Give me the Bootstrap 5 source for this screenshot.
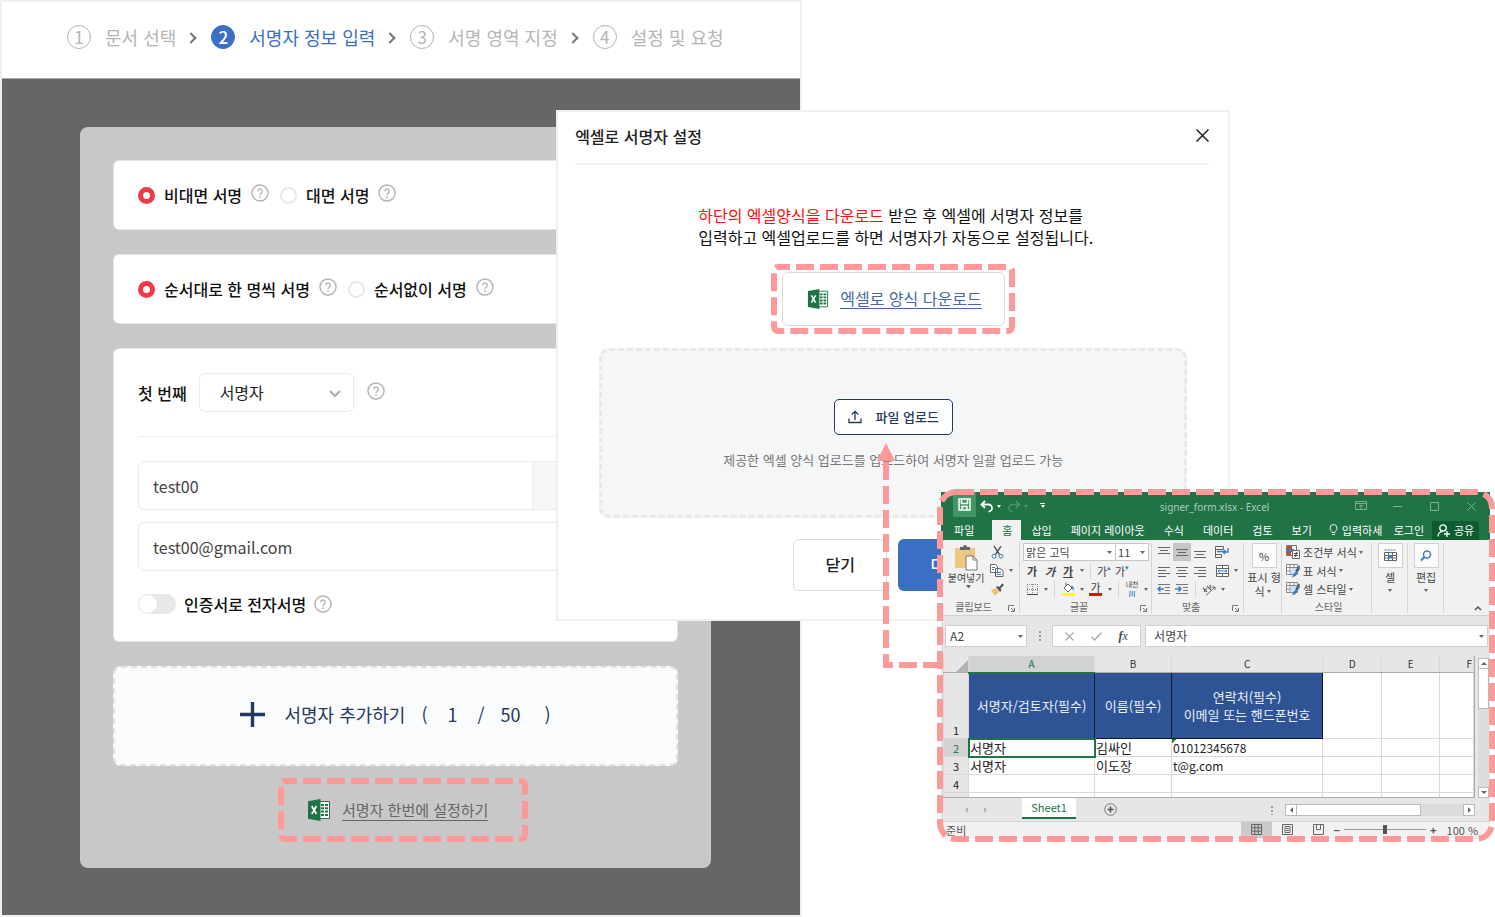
<!DOCTYPE html>
<html lang="ko">
<head>
<meta charset="utf-8">
<meta name="viewport" content="width=device-width, initial-scale=1">
<title>엑셀로 서명자 설정</title>
<link href="https://cdn.jsdelivr.net/npm/bootstrap@5.3.0/dist/css/bootstrap.min.css" rel="stylesheet">
<style>
:root{--pink:#ff9999;--navy:#24395e;--blue:#3a6fc4;--xl:#217346}
body{font-family:"Noto Sans CJK KR","Noto Sans",sans-serif;font-size:16px;line-height:24px;color:#111;background:#fff}
button{font-family:inherit}
.stage{min-height:100vh}
.wizard{width:53.65%;min-height:100vh;border:2px solid #f0f0f0}
.steps{height:77px;padding:0 0 7px 65px;border-bottom:1px solid #aaa;font-size:18px;color:#b5b5b5;white-space:nowrap}
.steps li{display:flex;align-items:center}
.steps li+li::before{content:"";width:8px;height:8px;border:solid #777;border-width:2px 2px 0 0;transform:rotate(45deg);margin:2px 16px 0 11px}
.num{width:24px;height:24px;border:1px solid #b5b5b5;border-radius:50%;font-size:17px;line-height:22px;text-align:center;margin-right:14px}
.now{color:var(--blue)}
.now .num{background:var(--blue);border-color:var(--blue);color:#fff;font-weight:500}
.dim{background:#666;padding:48px 89px 46px 78px}
.board{background:#c8c8c8;border-radius:8px;padding:33px 33px 26px}
.box{background:#fff;border-radius:6px;border:1px solid #e4e4e4;padding:0 24px;font-weight:500}
.choice{height:70px;margin-bottom:24px}
.choice .form-check-input,.setup .form-check-input{float:none;margin:0;box-shadow:none}
.choice .form-check-input{width:17px;height:17px;border:2px solid #e8e8e8;margin-right:9px}
.choice .form-check-input:checked{background:#fff;border:5px solid #ee3a49}
.help{width:18px;height:18px;margin:0 11px 4px 9px;flex:none}
.setup{padding-top:24px;padding-bottom:25px;margin-bottom:24px}
.first{margin-right:12px}
.role{width:155px;height:39px;font-size:16px;line-height:24px;padding:0 20px 2px;margin-right:4px;border-color:#ebebeb;border-radius:6px;color:#222;background-position:right 10px center;background-size:16px 16px;
--bs-form-select-bg-img:url("data:image/svg+xml,%3csvg xmlns='http://www.w3.org/2000/svg' viewBox='0 0 16 16'%3e%3cpath fill='none' stroke='%23aaa' stroke-width='2' d='m3 6 5 5 5-5'/%3e%3c/svg%3e")}
.setup hr{margin:24px 0;border-color:#bbb}
.field{height:49px;border-color:#ebebeb;border-radius:6px;padding:0 14px;font-size:16px;color:#444}
.addon{width:121px;background:#f7f7f7;border-color:#ebebeb}
.cert{margin-top:21px}
.setup .form-switch .form-check-input{width:38px;height:20px;border:0;background-color:#e8e8e8;background-size:20px 20px;
--bs-form-switch-bg:url("data:image/svg+xml,%3csvg xmlns='http://www.w3.org/2000/svg' viewBox='-4 -4 8 8'%3e%3ccircle r='3.8' fill='%23fff' stroke='%23e4e4e4' stroke-width='.4'/%3e%3c/svg%3e")}
.add{height:100px;background:#fafbfd;border:2px dashed #e2e2e2;border-radius:8px;color:var(--navy);font-size:18px;padding:0 0 4px;margin-bottom:12px}
.add svg{width:25px;height:25px;margin-right:19px}
.ring{position:relative}
.ring>.dash{position:absolute;inset:0;width:100%;height:100%;pointer-events:none}
.dash rect{x:3px;y:3px;width:calc(100% - 6px);height:calc(100% - 6px);fill:none;stroke:var(--pink);stroke-width:6;stroke-dasharray:18 6;stroke-dashoffset:6}
.batch{width:250px;height:64px;margin-left:165px;padding-left:29px;font-size:15px}
.batch a{color:#666}
.xicon{width:24px;height:24px;margin-right:11px;flex:none}
a.lined{text-decoration:none;border-bottom:1px solid currentColor;line-height:20px}

.sheet-dialog{position:absolute;left:37.2%;top:110px;width:45.1%;height:511px;background:#fff;border:2px solid #f0f0f0}
.sheet-dialog header{margin:0 19px 0 17px;height:53px;padding-bottom:4px;border-bottom:2px solid #f0f0f0;font-weight:500;color:#222}
.x{border:0;background:none;padding:0;width:13px;height:24px;display:flex;align-items:center}
.desc{margin:39px auto 16px;width:390px;line-height:22px;color:#111;white-space:nowrap}
.desc em{font-style:normal;color:#ff0d0d}
.down{width:244px;height:70px;margin:0 auto 14px;padding:8px 10px 8px 11px}
.down>a{display:flex;align-items:center;height:54px;width:100%;border:1px solid #dcdcdc;border-radius:6px;padding-left:24px;color:#4668a6;text-decoration:none}
.down .xicon{width:22px;height:22px}
.down u{text-decoration:none;border-bottom:1px solid;line-height:20px;margin-bottom:1px}
.drop{margin:0 41px;height:170px;background:#f5f6f8;border:3px dashed #e8e8e8;border-radius:10px;font-size:13px;line-height:20px;color:#777;padding-top:48px}
.upload{width:119px;height:36px;background:#fff;border:1px solid #24395e;border-radius:5px;color:#24395e;font-weight:500;font-size:13px;padding:0;margin-bottom:15px}
.upload svg{width:14px;height:14px;margin-right:14px}
.acts{gap:11px;margin-top:21px;padding-right:1px}
.acts button{width:94px;height:52px;border-radius:6px;padding:0 0 2px;font-size:16px;font-weight:500}
.acts .close-it{border:1px solid #dcdcdc;background:#fff;color:#222}
.acts .next{background:var(--blue);color:#fff;border:0}

.excel{position:absolute;left:62.95%;right:5px;min-width:549px;top:492px;background:#e6e6e6;font-size:11px;line-height:14px;color:#444}
.excel>.frame{position:absolute;left:-4px;top:-3px;width:calc(100% + 9px);height:calc(100% + 6px);pointer-events:none}
.frame rect{rx:16px;stroke-dashoffset:0}
.link-line{position:absolute;right:100%;top:-50px;width:67px;height:230px;pointer-events:none}
.excel button{border:0;background:none;padding:0;color:inherit;font-size:inherit;line-height:inherit;display:flex;align-items:center;justify-content:center}
.excel svg{flex:none}
.cap{height:28px;background:var(--xl);color:#fff}
.cap .save{width:23px;height:25px;background:#439467;margin-left:12px}
.cap .wbtn{width:37px;color:#7db094}
.cap .name{color:#a9cdb8;font-size:10px;font-family:"Noto Sans",sans-serif;padding-left:40px;padding-top:2px}
.tabs{height:20px;background:var(--xl);color:#fff;white-space:nowrap}
.tabs a{color:#fff;text-decoration:none;padding:0 9px 0 10px;line-height:20px}
.tabs a.file{padding:0 18px 0 13px}
.tabs a.on{background:#f1f1f1;color:var(--xl)}
.tabs .share{background:#0e5c2f;width:47px;height:19px;color:#fff;margin-right:11px}
.ribbon{height:76px;background:#f1f1f1;border-bottom:1px solid #d2d2d2;white-space:nowrap}
.grp{position:relative;border-right:1px solid #d5d5d5;margin:3px 0 5px;padding-left:3px;height:70px}
.grp>.lab{height:15px;font-size:10px;color:#666;text-align:center;line-height:18px}
.grp .launch{position:absolute;right:4px;bottom:1px;width:7px;height:7px}
.rows{display:grid;grid-template-rows:18px 19px 18px;height:55px}
.rows>div{display:flex;align-items:center}
.rows button{width:18px;height:18px}
.excel .rows .dd,.dd{width:9px;height:12px}
.dd::after{content:"";border:solid transparent;border-width:3px 2px 0;border-top-color:#666;display:block}
.cap .dd::after{border-top-color:#fff}
.vs{width:9px;height:16px;background:linear-gradient(#d5d5d5,#d5d5d5) center/1px 100% no-repeat}
.excel .pick{background-color:#fff;border:1px solid #c6c6c6;border-radius:0;height:18px;font-size:11px;line-height:14px;padding:0 0 0 2px;color:#444;min-height:0;background-position:right 3px center;background-size:5px 3px;
--bs-form-select-bg-img:url("data:image/svg+xml,%3csvg xmlns='http://www.w3.org/2000/svg' viewBox='0 0 5 3'%3e%3cpath fill='%23666' d='M0 0h5L2.500 3z'/%3e%3c/svg%3e")}
.ga{font-size:10px}
.big{display:flex;flex-direction:column;align-items:center;width:30px;height:55px;line-height:14px}
.excel .big .tile{width:25px;height:25px;border:1px solid #d0d0d0;background:#fbfbfb;margin-bottom:2px}
.sty button{width:auto;justify-content:flex-start}
.sty svg{margin-right:3px}
.fx{padding:9px 2px 9px 4px;height:40px}
.fx input,.fx .tools,.fx select.pick{height:22px;border:1px solid #cfcfcf;background-color:#fff;border-radius:0;font-size:12px;line-height:16px;color:#444}
.fx .cell{flex:1;min-width:0;padding:0 8px}
.grid-wrap{padding-left:2px;height:142px;overflow:hidden}
.cells{flex:1;min-width:0;height:142px;overflow:hidden;border-bottom:1px solid #aaa;border-right:1px solid #aaa}
.cells table{width:100%;table-layout:fixed;border-collapse:collapse;color:#222;font-size:13px;line-height:16px;background:#fff}
.cells td,.cells th{border:1px solid #d9d9d9;padding:0 1px;height:18px;overflow:hidden;white-space:nowrap;font-weight:400}
.cells thead th{background:#e6e6e6;border-top:0;border-bottom-color:#aaa;height:16px;font-size:10px;line-height:15px;vertical-align:top;overflow:visible;text-align:center;color:#333}
.cells tbody th{background:#e6e6e6;font-size:11px;text-align:center;vertical-align:bottom;line-height:15px}
.cells thead th.hot{background:#d2d2d2;color:var(--xl);border-bottom:2px solid var(--xl)}
.cells tbody th.hot{background:#d2d2d2;color:var(--xl)}
.cells .hd td.k{background:#2f5496;color:#e9eef7;text-align:center;line-height:18px;border-color:#10182b}
.cells .hd td,.cells .hd th{height:66px}
.cells td.sel{outline:2px solid var(--xl);outline-offset:-1px}
.cells td.flag{background:linear-gradient(135deg,#1a8a1a 3px,transparent 3px) no-repeat}
.cells td.lat{font-size:12px}
.vbar{width:15px;padding:2px 1px 0 3px}
.vbar button{width:11px;height:11px;background:#fff;border:1px solid #bbb}
.vbar .thumb{height:40px;width:11px;background:#fff;border:1px solid #bbb;border-top:0}
.vbar .rail{flex:1;width:11px;background:#dcdcdc}
.up::after{content:"";border:solid transparent;border-width:0 3px 3px;border-bottom-color:#666}
.dn::after{content:"";border:solid transparent;border-width:3px 3px 0;border-top-color:#666}
.lf::after{content:"";border:solid transparent;border-width:3px 3px 3px 0;border-right-color:#666}
.rt::after{content:"";border:solid transparent;border-width:3px 0 3px 3px;border-left-color:#666}
.faint::after{opacity:.4}
.books{height:23px;color:#444}
.books .tab1{width:54px;height:21px;background:#fff;border-bottom:2px solid var(--xl);color:var(--xl);text-align:center;line-height:19px;text-decoration:none;margin-left:27px}
.hbar{width:190px;margin-right:15px;height:12px}
.hbar button{width:12px;height:12px;background:#fff;border:1px solid #bbb}
.hbar .thumb{width:124px;height:12px;background:#fff;border:1px solid #bbb;border-left:0}
.hbar .rail{flex:1;height:12px;background:#dcdcdc}
.stat{height:18px;background:#f1f1f1;border-top:1px solid #d2d2d2;color:#555;line-height:12px;padding:0 12px 2px 5px}
.stat button{width:31px;height:16px}
.stat .on{background:#cacaca}
.zoomer{appearance:none;width:82px;height:12px;background:linear-gradient(#999,#999) center/100% 1px no-repeat;margin:0 4px}
.zoomer::-webkit-slider-thumb{appearance:none;width:4px;height:9px;background:#555}
.pct{margin-left:10px}
</style>
</head>
<body>
<svg width="0" height="0" class="position-absolute" aria-hidden="true">
<symbol id="q" viewBox="0 0 18 18"><circle cx="9" cy="9" r="8" fill="none" stroke="#b3b3b3" stroke-width="1.400"/><path d="M6.700 7.300a2.300 2.300 0 1 1 3.500 2c-.8.500-1.200.9-1.200 1.700v.3" fill="none" stroke="#b3b3b3" stroke-width="1.300"/><circle cx="9" cy="13.200" r=".9" fill="#b3b3b3"/></symbol>
<symbol id="xls" viewBox="0 0 24 24"><path d="M12 3.500h10.500v17H12z" fill="#fff" stroke="#207347"/><path d="M14 6h3v2h-3zm4 0h3v2h-3zm-4 3.300h3v2h-3zm4 0h3v2h-3zm-4 3.300h3v2h-3zm4 0h3v2h-3zm-4 3.300h3v2h-3zm4 0h3v2h-3z" fill="#207347"/><path d="M1 3.200 13.500 1v22L1 20.800z" fill="#207347"/><path d="m4.800 8 4.600 8M9.400 8l-4.600 8" stroke="#fff" stroke-width="1.700"/></symbol>
<symbol id="ln-t" viewBox="0 0 14 14"><path d="M1 2.500h12M3 5.500h8M1 8.500h12" stroke="#666"/></symbol>
<symbol id="ln-b" viewBox="0 0 14 14"><path d="M1 6.500h12M3 9.500h8M1 12.500h12" stroke="#666"/></symbol>
<symbol id="ln-m" viewBox="0 0 14 14"><path d="M1 4.500h12M3 7.500h8M1 10.500h12" stroke="#666"/></symbol>
<symbol id="ln-l" viewBox="0 0 14 14"><path d="M1 3.500h12M1 6.500h8M1 9.500h12M1 12.500h8" stroke="#666"/></symbol>
<symbol id="ln-c" viewBox="0 0 14 14"><path d="M1 3.500h12M3 6.500h8M1 9.500h12M3 12.500h8" stroke="#666"/></symbol>
<symbol id="ln-r" viewBox="0 0 14 14"><path d="M1 3.500h12M5 6.500h8M1 9.500h12M5 12.500h8" stroke="#666"/></symbol>
<symbol id="la" viewBox="0 0 7 7"><path d="M.5 6V.5H6M3 3l3 3M6.500 3v3.500H3" fill="none" stroke="#777"/></symbol>
<symbol id="tb" viewBox="0 0 14 14"><path d="M.5.5h11v10H.5zM.5 3.500h11M.5 7h11M4 .5v10M8 .5v10" fill="#fff" stroke="#888"/><path d="M4 4h7v6H5z" fill="#cfe0f2"/><path d="m13.500 3-6 7-1.500 3.500 3.500-1.500 4.500-7z" fill="#3d7cc0"/><path d="m13.500 2-3.500 5" stroke="#555" stroke-width="1.500"/></symbol>
</svg>

<main class="stage position-relative">
<section class="wizard d-flex flex-column">
  <ol class="steps list-unstyled d-flex align-items-center mb-0 flex-shrink-0">
    <li><span class="num">1</span>문서 선택</li>
    <li><span class="d-flex align-items-center now"><span class="num">2</span>서명자 정보 입력</span></li>
    <li><span class="num">3</span>서명 영역 지정</li>
    <li><span class="num">4</span>설정 및 요청</li>
  </ol>
  <div class="dim flex-grow-1">
    <form class="board">
      <div class="box choice d-flex align-items-center">
        <input class="form-check-input" type="radio" name="mode" id="m1" checked><label for="m1">비대면 서명</label><svg class="help"><use href="#q"/></svg>
        <input class="form-check-input" type="radio" name="mode" id="m2"><label for="m2">대면 서명</label><svg class="help"><use href="#q"/></svg>
      </div>
      <div class="box choice d-flex align-items-center">
        <input class="form-check-input" type="radio" name="order" id="o1" checked><label for="o1">순서대로 한 명씩 서명</label><svg class="help"><use href="#q"/></svg>
        <input class="form-check-input" type="radio" name="order" id="o2"><label for="o2">순서없이 서명</label><svg class="help"><use href="#q"/></svg>
      </div>
      <div class="box setup">
        <div class="d-flex align-items-center">
          <label for="role" class="first">첫 번째</label>
          <select class="form-select role" id="role"><option>서명자</option></select>
          <svg class="help"><use href="#q"/></svg>
        </div>
        <hr>
        <div class="input-group mb-2 pb-1">
          <input class="form-control field" type="text" value="test00" aria-label="이름">
          <span class="input-group-text addon"></span>
        </div>
        <input class="form-control field" type="email" value="test00@gmail.com" aria-label="이메일">
        <div class="form-switch cert d-flex align-items-center ps-0">
          <input class="form-check-input" type="checkbox" role="switch" id="cert">
          <label for="cert" class="ms-2">인증서로 전자서명</label><svg class="help mb-0 ms-2"><use href="#q"/></svg>
        </div>
      </div>
      <button type="button" class="add w-100 d-flex align-items-center justify-content-center">
        <svg viewBox="0 0 25 25"><path d="M12.500 0v25M0 12.500h25" stroke="#24395e" stroke-width="3.400"/></svg>
        <span class="me-3">서명자 추가하기</span><span class="me-3">(</span><span class="me-3 ms-1">1</span><span class="me-3 ms-1">/</span><span class="me-3">50</span><span class="ms-2">)</span>
      </button>
      <div class="ring batch d-flex align-items-center">
        <svg class="xicon"><use href="#xls"/></svg><a href="#" class="lined">서명자 한번에 설정하기</a>
        <svg class="dash"><rect rx="4"/></svg>
      </div>
    </form>
  </div>
</section>

<section class="sheet-dialog" role="dialog" aria-labelledby="dt">
  <header class="d-flex align-items-center justify-content-between"><span id="dt">엑셀로 서명자 설정</span>
    <button class="x" aria-label="닫기"><svg width="13" height="13" viewBox="0 0 13 13"><path d="m.5.5 12 12m0-12-12 12" stroke="#222" stroke-width="1.500"/></svg></button></header>
  <p class="desc"><em>하단의 엑셀양식을 다운로드</em> 받은 후 엑셀에 서명자 정보를<br>입력하고 엑셀업로드를 하면 서명자가 자동으로 설정됩니다.</p>
  <div class="ring down"><a href="#"><svg class="xicon" viewBox="0 0 24 24"><use href="#xls"/></svg><u>엑셀로 양식 다운로드</u></a><svg class="dash"><rect rx="4"/></svg></div>
  <div class="drop d-flex flex-column align-items-center">
    <button class="upload d-flex align-items-center justify-content-center"><svg viewBox="0 0 14 14"><path d="M1 8.500v4h12v-4M7 10V1.500M3.800 4.500 7 1.300l3.200 3.200" fill="none" stroke="#24395e" stroke-width="1.300"/></svg>파일 업로드</button>
    <span>제공한 엑셀 양식 업로드를 업로드하여 서명자 일괄 업로드 가능</span>
  </div>
  <div class="acts d-flex justify-content-center"><button class="close-it">닫기</button><button class="next">다음</button></div>
</section>

<section class="excel" aria-label="signer_form.xlsx">
  <div class="cap d-flex align-items-center">
    <button class="save align-self-start" aria-label="저장"><svg width="13" height="13" viewBox="0 0 13 13"><path d="M1 1h11v11H1zM3.500 1v4.500h6V1M4 12V8.500h5V12" fill="none" stroke="#fff" stroke-width="1.500"/></svg></button>
    <button class="ms-1" aria-label="실행 취소"><svg width="14" height="13" viewBox="0 0 14 13"><path d="M5 1 1.500 4.500 5 8M2 4.500h6.500a3.500 3.500 0 0 1 0 7" fill="none" stroke="#fff" stroke-width="1.800"/></svg></button><button class="dd" aria-label="더 보기"></button>
    <button class="ms-1" aria-label="다시 실행"><svg width="14" height="13" viewBox="0 0 14 13"><path d="m9 1 3.500 3.500L9 8m3-3.500H5.500a3.500 3.500 0 0 0 0 7" fill="none" stroke="#4d9069" stroke-width="1.600"/></svg></button><span class="dd d-flex align-items-center justify-content-center opacity-25"></span>
    <button class="dd ms-2" aria-label="도구 모음"><svg width="5" height="8" class="position-absolute"><path d="M0 1.500h5" stroke="#fff"/></svg></button>
    <span class="name flex-grow-1 text-center">signer_form.xlsx - Excel</span>
    <button class="wbtn" aria-label="리본"><svg width="12" height="10" viewBox="0 0 12 10"><path d="M.5.5h11v8H.5zM.5 2.500h11M6 8V4M4 5.500 6 4l2 1.500" fill="none" stroke="currentColor"/></svg></button>
    <button class="wbtn" aria-label="최소화"><svg width="9" height="9"><path d="M0 4.500h9" stroke="currentColor"/></svg></button>
    <button class="wbtn" aria-label="최대화"><svg width="9" height="9"><path d="M.5.5h8v8h-8z" fill="none" stroke="currentColor"/></svg></button>
    <button class="wbtn" aria-label="닫기"><svg width="9" height="9"><path d="m.5.5 8 8m0-8-8 8" stroke="currentColor"/></svg></button>
  </div>
  <nav class="tabs d-flex align-items-center" aria-label="리본 탭">
    <a href="#" class="file">파일</a><a href="#" class="on">홈</a><a href="#">삽입</a><a href="#">페이지 레이아웃</a><a href="#">수식</a><a href="#">데이터</a><a href="#">검토</a><a href="#">보기</a>
    <svg class="ms-2 me-1" width="9" height="12" viewBox="0 0 9 12"><path d="M3 8.500C3 7 1 6.500 1 4a3.500 3.500 0 0 1 7 0c0 2.500-2 3-2 4.500zM3 10.500h3" fill="none" stroke="#e6f0ea"/></svg><span>입력하세</span>
    <a href="#" class="ms-auto pe-2">로그인</a>
    <button class="share"><svg class="me-1" width="13" height="13" viewBox="0 0 13 13"><circle cx="6" cy="4" r="3.200" fill="none" stroke="#fff" stroke-width="1.300"/><path d="M1 12.500c0-3 2-5 4.500-5M10 7v6M7 10h6" fill="none" stroke="#fff" stroke-width="1.300"/></svg>공유</button>
  </nav>
  <div class="ribbon d-flex">
    <div class="grp" style="width:79px">
      <div class="d-flex" style="height:55px">
        <button class="flex-column" style="width:44px">
          <svg width="26" height="27" viewBox="0 0 26 27"><path d="M2 4h20v20H2z" fill="#edc87e"/><path d="M7 3h3a2 2 0 0 1 4 0h3v3H7z" fill="#666"/><path d="M13 12h7l4 4v10H13z" fill="#fff" stroke="#777"/><path d="M20 12v4h4" fill="none" stroke="#777"/></svg>
          <span style="font-size:10px">붙여넣기</span><span class="dd d-block ps-1"></span></button>
        <div class="rows">
          <div><button aria-label="잘라내기"><svg width="13" height="13" viewBox="0 0 13 13"><path d="m3 0 5.500 8.500M10 0 4.500 8.500" stroke="#555" stroke-width="1.400"/><circle cx="3" cy="10.200" r="2" fill="none" stroke="#3d7cc0"/><circle cx="10" cy="10.200" r="2" fill="none" stroke="#3d7cc0"/></svg></button></div>
          <div><button aria-label="복사"><svg width="14" height="13" viewBox="0 0 14 13"><path d="M.5.500h5l2 2v6h-7zM5.500 4.500h5l2.500 2v6H5.500z" fill="#fff" stroke="#666"/><path d="M2 3.500h3M2 5.500h2M7 8.500h4M7 10.500h4" stroke="#3d7cc0"/></svg></button><button class="dd" aria-label="복사 옵션"></button></div>
          <div><button aria-label="서식 복사"><svg width="14" height="13" viewBox="0 0 14 13"><path d="m1 7 5-2 3 4-4 4z" fill="#edc07a"/><path d="m6 4 4 5 1.500-1.500-1-2L14 2l-1.500-1.500L9 4 7.500 3z" fill="#555"/></svg></button></div>
        </div>
      </div>
      <div class="lab pe-3">클립보드</div><svg class="launch"><use href="#la"/></svg>
    </div>
    <div class="grp" style="width:132px">
      <div class="rows">
        <div><select class="form-select pick" style="width:93px" aria-label="글꼴"><option>맑은 고딕</option></select><select class="form-select pick border-start-0" style="width:33px" aria-label="크기"><option>11</option></select></div>
        <div><button class="ga fw-bold">가</button><button class="ga fst-italic fw-bold">가</button><button class="ga text-decoration-underline fw-bold">가</button><button class="dd" aria-label="밑줄"></button><span class="vs"></span><button>가<sup style="color:#3d7cc0;font-size:7px">▴</sup></button><button class="ga">가<sup style="color:#3d7cc0;font-size:7px">▾</sup></button></div>
        <div><button aria-label="테두리"><svg width="11" height="11"><path d="M.5 0v10M10.500 0v10M5.500 0v10M0 .5h11M0 5.500h11" stroke="#888" stroke-dasharray="1 1"/><path d="M0 10.500h11" stroke="#444"/></svg></button><button class="dd" aria-label="테두리 옵션"></button><span class="vs"></span>
          <button aria-label="채우기"><svg width="13" height="14" viewBox="0 0 13 14"><path d="m2 6 4-4 4 4-4 4zM4 4V.5" fill="#fff" stroke="#666"/><path d="M9 4c3 0 3 2 2.500 5-1-2-1.500-3-2.500-3z" fill="#3d7cc0"/><path d="M0 11h13v3H0z" fill="#ff0"/></svg></button><button class="dd" aria-label="채우기 옵션"></button>
          <button class="flex-column" style="border-bottom:3px solid red;width:13px;height:14px;margin:0 3px;line-height:11px">가</button><button class="dd" aria-label="글꼴 색"></button><span class="vs"></span>
          <button class="flex-column" style="font-size:7px;line-height:9px"><span>내천</span><span style="color:#3d7cc0" class="fw-bold">川</span></button><button class="dd" aria-label="윗주"></button></div>
      </div>
      <div class="lab pe-3">글꼴</div><svg class="launch"><use href="#la"/></svg>
    </div>
    <div class="grp" style="width:92px">
      <div class="rows">
        <div><button aria-label="위쪽"><svg width="14" height="14"><use href="#ln-t"/></svg></button><button aria-label="가운데" style="background:#c6c6c6"><svg width="14" height="14"><use href="#ln-m"/></svg></button><button aria-label="아래쪽"><svg width="14" height="14"><use href="#ln-b"/></svg></button><button class="ms-1" aria-label="줄 바꿈"><svg width="14" height="12" viewBox="0 0 14 12"><path d="M.5.500h8v3h-8zM.5 8.500h6v3h-6zM.5 3v6" fill="none" stroke="#666"/><path d="M2 5.500h9M13 2v4H8m2-2L8 6l2 2" fill="none" stroke="#3d7cc0" stroke-width="1.300"/></svg></button></div>
        <div><button aria-label="왼쪽 맞춤"><svg width="14" height="14"><use href="#ln-l"/></svg></button><button aria-label="가운데 맞춤"><svg width="14" height="14"><use href="#ln-c"/></svg></button><button aria-label="오른쪽 맞춤"><svg width="14" height="14"><use href="#ln-r"/></svg></button><button class="ms-1" aria-label="병합"><svg width="13" height="12" viewBox="0 0 13 12"><path d="M.5.500h12v11H.5zM.5 3.500h12M.5 8.500h12M6.500.500v3M6.500 8.500v3" fill="#fff" stroke="#666"/><path d="M2 6h9M3.500 4.500 2 6l1.500 1.500M9.500 4.500 11 6 9.500 7.500" fill="none" stroke="#3d7cc0"/></svg></button><button class="dd" aria-label="병합 옵션"></button></div>
        <div><button aria-label="내어쓰기"><svg width="14" height="13"><path d="M1 1.500h12M8 4.500h5M8 7.500h5M1 10.500h12" stroke="#777"/><path d="M1 6h6M3.500 3.500 1 6l2.500 2.500" fill="none" stroke="#3d7cc0" stroke-width="1.500"/></svg></button><button aria-label="들여쓰기"><svg width="14" height="13"><path d="M1 1.500h12M8 4.500h5M8 7.500h5M1 10.500h12" stroke="#777"/><path d="M0 6h6M3.500 3.500 6 6 3.500 8.500" fill="none" stroke="#3d7cc0" stroke-width="1.500"/></svg></button><span class="vs"></span>
          <button aria-label="방향"><svg width="14" height="13" viewBox="0 0 14 13"><path d="M4 12.500 13 4M13 7V4h-3" fill="none" stroke="#666"/><path d="m1 5 4 4M2 9l3-4M5 3l4 4M8 2l1 3" stroke="#666" stroke-width="1.200"/></svg></button><button class="dd" aria-label="방향 옵션"></button></div>
      </div>
      <div class="lab pe-3">맞춤</div><svg class="launch"><use href="#la"/></svg>
    </div>
    <div class="grp" style="width:38px"><div class="big w-auto"><button class="tile">%</button><span>표시 형</span><span class="d-flex align-items-center">식<button class="dd" aria-label="표시 형식"></button></span></div></div>
    <div class="grp ps-1" style="width:90px">
      <div class="rows sty">
        <div><button><svg width="14" height="14" viewBox="0 0 14 14"><path d="M.5.500h10v10H.5z" fill="#fff" stroke="#777"/><path d="M1 1h5v3H1zM1 7h4v3H1z" fill="#d24726"/><path d="M1 4h7v3H1z" fill="#3d7cc0"/><path d="M6.500 5.500h7v8h-7z" fill="#fff" stroke="#666"/><path d="M8 8.500h4M8 10.500h4m-1-3.500-2 5" stroke="#444"/></svg>조건부 서식<span class="dd d-flex align-items-center justify-content-center"></span></button></div>
        <div><button><svg width="14" height="14"><use href="#tb"/></svg>표 서식<span class="dd d-flex align-items-center justify-content-center"></span></button></div>
        <div><button><svg width="14" height="14"><use href="#tb"/></svg>셀 스타일<span class="dd d-flex align-items-center justify-content-center"></span></button></div>
      </div>
      <div class="lab">스타일</div>
    </div>
    <div class="grp" style="width:36px"><div class="big"><button class="tile" aria-label="셀"><svg width="13" height="13" viewBox="0 0 13 13"><path d="M.5 3.500h12v8H.5zM.5 6.500h12M.5 9h12M4.500 3.500v8M8.500 3.500v8" fill="#fff" stroke="#666"/><path d="M4 6h5v3H4z" fill="#3d7cc0"/><path d="M.5 1h12" stroke="#3d7cc0" stroke-dasharray="2 1"/></svg></button><span>셀</span><button class="dd" aria-label="셀 옵션"></button></div></div>
    <div class="grp" style="width:36px"><div class="big"><button class="tile" aria-label="편집"><svg width="12" height="12" viewBox="0 0 12 12"><circle cx="7" cy="4.500" r="3.500" fill="none" stroke="#3d7cc0" stroke-width="1.500"/><path d="M4.500 7 1 10.500" stroke="#3d7cc0" stroke-width="2"/></svg></button><span>편집</span><button class="dd" aria-label="편집 옵션"></button></div></div>
    <button class="ms-auto align-self-end me-2 mb-1" aria-label="리본 축소"><svg width="8" height="6"><path d="m1 5 3-3 3 3" fill="none" stroke="#555" stroke-width="1.500"/></svg></button>
  </div>
  <div class="fx d-flex align-items-center">
    <select class="form-select pick ps-1" style="width:82px" aria-label="이름 상자"><option>A2</option></select>
    <svg width="25" height="12"><path d="M13 1v11" stroke="#999" stroke-width="2" stroke-dasharray="2 2"/></svg>
    <div class="tools d-flex align-items-center justify-content-around me-1 px-1" style="width:89px"><button aria-label="취소"><svg width="9" height="9"><path d="m.5.5 8 8m0-8-8 8" stroke="#aaa" stroke-width="1.300"/></svg></button><button aria-label="입력"><svg width="11" height="9"><path d="m.5 5 3 3 7-7.500" fill="none" stroke="#aaa" stroke-width="1.500"/></svg></button><button class="fst-italic" style="font-family:'Liberation Serif',serif" aria-label="함수 삽입"><b>f</b>x</button></div>
    <select class="form-select pick cell" aria-label="수식"><option>서명자</option></select>
  </div>
  <div class="grid-wrap d-flex">
    <div class="cells">
      <table>
        <colgroup><col style="width:25px"><col style="width:126px"><col style="width:77px"><col style="width:151px"><col style="width:59px"><col style="width:58px"><col></colgroup>
        <thead><tr><th class="p-0"><svg width="12" height="12" class="d-block ms-auto mt-1"><path d="M12 0v12H0z" fill="#b5b5b5"/></svg></th><th class="hot">A</th><th>B</th><th>C</th><th>D</th><th>E</th><th class="text-end">F</th></tr></thead>
        <tbody>
          <tr class="hd"><th>1</th><td class="k">서명자/검토자(필수)</td><td class="k">이름(필수)</td><td class="k">연락처(필수)<br>이메일 또는 핸드폰번호</td><td></td><td></td><td></td></tr>
          <tr><th class="hot">2</th><td class="sel">서명자</td><td>김싸인</td><td class="flag lat">01012345678</td><td></td><td></td><td></td></tr>
          <tr><th>3</th><td>서명자</td><td>이도장</td><td class="lat">t@g.com</td><td></td><td></td><td></td></tr>
          <tr><th>4</th><td></td><td></td><td></td><td></td><td></td><td></td></tr>
          <tr><th></th><td></td><td></td><td></td><td></td><td></td><td></td></tr>
        </tbody>
      </table>
    </div>
    <div class="vbar d-flex flex-column"><button class="up" aria-label="위로"></button><div class="thumb"></div><div class="rail"></div><button class="dn" aria-label="아래로"></button></div>
  </div>
  <div class="books d-flex align-items-center">
    <button class="lf faint ms-4 px-0" aria-label="이전 시트"></button><button class="rt faint ms-3 me-2" aria-label="다음 시트"></button>
    <a href="#" class="tab1 align-self-start">Sheet1</a>
    <button class="ms-4 ps-1" aria-label="새 시트"><svg width="13" height="13"><circle cx="6.500" cy="6.500" r="5.800" fill="none" stroke="#777"/><path d="M3.500 6.500h6M6.500 3.500v6" stroke="#555" stroke-width="1.600"/></svg></button>
    <svg class="ms-auto me-2" width="10" height="10"><path d="M5 1v9" stroke="#999" stroke-width="2" stroke-dasharray="2 2"/></svg>
    <div class="hbar d-flex"><button class="lf" aria-label="왼쪽"></button><div class="thumb"></div><div class="rail"></div><button class="rt" aria-label="오른쪽"></button></div>
  </div>
  <div class="stat d-flex align-items-center">
    <span class="me-auto">준비</span>
    <button class="on" aria-label="기본"><svg width="11" height="11"><path d="M.5.500h10v10H.5zM.5 3.800h10M.5 7.200h10M3.800.500v10M7.200.500v10" fill="none" stroke="#666"/></svg></button>
    <button aria-label="페이지 레이아웃"><svg width="11" height="11"><path d="M.5.500h10v10H.5zM3 2.500h5v6H3zM4 4.500h3M4 6.500h3" fill="none" stroke="#666"/></svg></button>
    <button aria-label="페이지 나누기"><svg width="11" height="11"><path d="M.5.500h10v10H.5zM3.500.500v5h4v-5" fill="none" stroke="#666"/></svg></button>
    <b>−</b><input class="zoomer" type="range" aria-label="확대/축소" value="50"><b>+</b><span class="pct">100 %</span>
  </div>
  <svg class="dash frame"><rect/></svg>
  <svg class="link-line" viewBox="0 0 67 230"><path d="M67 223H12V18" fill="none" stroke="#ff9999" stroke-width="6" stroke-dasharray="18 6"/><path d="M3 19 12 1l9 18z" fill="#ff9999"/></svg>
</section>
</main>
<script src="https://cdn.jsdelivr.net/npm/bootstrap@5.3.0/dist/js/bootstrap.bundle.min.js"></script>
</body>
</html>
